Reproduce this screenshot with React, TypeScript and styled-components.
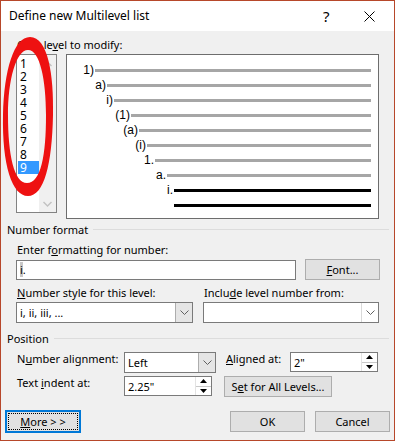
import React from 'react';
import styled, { createGlobalStyle } from 'styled-components';

const GlobalStyle = createGlobalStyle`
  html, body {
    margin: 0;
    padding: 0;
    background: #f0f0f0;
  }
  body {
    font-family: 'Segoe UI', 'Noto Sans', sans-serif;
    font-size: 11px;
    color: #000;
  }
  * {
    box-sizing: border-box;
  }
`;

const levels = ['1', '2', '3', '4', '5', '6', '7', '8', '9'];

const previewRows = [
  { label: '1)', indent: 28 },
  { label: 'a)', indent: 40 },
  { label: 'i)', indent: 47 },
  { label: '(1)', indent: 64 },
  { label: '(a)', indent: 72 },
  { label: '(i)', indent: 80 },
  { label: '1.', indent: 88 },
  { label: 'a.', indent: 100 },
  { label: 'i.', indent: 107, active: true },
  { label: '', indent: 107, active: true },
];

// hand-drawn loop round the level list
const ringPath =
  'M30 37 C48 37 54 75 53 115 C52 165 44 196 28 196 C12 196 2 165 3 115 C4 70 14 37 30 37 Z ' +
  'M28 50 C40 50 46 80 46 115 C46 155 41 183 27 183 C14 183 8 155 8 115 C8 80 16 50 28 50 Z';

const ChevronDown = () => (
  <svg width="9" height="6" viewBox="0 0 9 6">
    <path d="M0.5 0.5 L4.5 4.5 L8.5 0.5" fill="none" stroke="#606060" strokeWidth="1" />
  </svg>
);

const Spinner = () => (
  <SpinButtons>
    <SpinHalf>
      <svg width="7" height="4" viewBox="0 0 7 4">
        <path d="M0 4 L3.5 0 L7 4 Z" fill="#000" />
      </svg>
    </SpinHalf>
    <SpinHalf $bottom>
      <svg width="7" height="4" viewBox="0 0 7 4">
        <path d="M0 0 L3.5 4 L7 0 Z" fill="#000" />
      </svg>
    </SpinHalf>
  </SpinButtons>
);

export default function App() {
  return (
    <>
      <GlobalStyle />
      <Window>
        <TitleBar>
          <Title>Define new Multilevel list</Title>
          <HelpGlyph>?</HelpGlyph>
          <CloseGlyph>
            <svg width="11" height="11" viewBox="0 0 11 11">
              <path d="M0.5 0.5 L10.5 10.5 M10.5 0.5 L0.5 10.5" stroke="#000" strokeWidth="1" />
            </svg>
          </CloseGlyph>
        </TitleBar>

        <Body>
          <Indented>
            <Label $mt={7}>
              Click le<u>v</u>el to modify:
            </Label>
            <LevelRow>
              <LevelList>
                <LevelItems>
                  {levels.map((l) => (
                    <LevelItem key={l} $selected={l === '9'}>
                      {l}
                    </LevelItem>
                  ))}
                </LevelItems>
                <ScrollTrack>
                  <svg width="9" height="6" viewBox="0 0 9 6">
                    <path d="M0.5 5 L4.5 1 L8.5 5" fill="none" stroke="#c2c2c2" strokeWidth="1.4" />
                  </svg>
                  <svg width="9" height="6" viewBox="0 0 9 6">
                    <path d="M0.5 1 L4.5 5 L8.5 1" fill="none" stroke="#c2c2c2" strokeWidth="1.4" />
                  </svg>
                </ScrollTrack>
              </LevelList>
              <Preview>
                {previewRows.map((r, i) => (
                  <PreviewRow key={i}>
                    <PreviewLabel $width={r.indent}>{r.label}</PreviewLabel>
                    <PreviewLine $active={!!r.active} />
                  </PreviewRow>
                ))}
              </Preview>
            </LevelRow>
          </Indented>

          <SectionHeader $mt={3}>
            <span>Number format</span>
            <Rule />
          </SectionHeader>

          <Indented>
            <Label $mt={6}>
              Enter f<u>o</u>rmatting for number:
            </Label>
            <FormatRow>
              <TextBox $width={280}>
                <Selected>i</Selected>.
              </TextBox>
              <Button $width={75}>
                <u>F</u>ont...
              </Button>
            </FormatRow>
            <TwoCols>
              <Field>
                <Label>
                  <u>N</u>umber style for this level:
                </Label>
                <Select $width={177}>
                  <SelectValue>i, ii, iii, ...</SelectValue>
                  <DropButton $filled>
                    <ChevronDown />
                  </DropButton>
                </Select>
              </Field>
              <Field>
                <Label>
                  Inclu<u>d</u>e level number from:
                </Label>
                <Select $width={176}>
                  <SelectValue />
                  <DropButton>
                    <ChevronDown />
                  </DropButton>
                </Select>
              </Field>
            </TwoCols>
          </Indented>

          <SectionHeader $mt={8}>
            <span>Position</span>
            <Rule />
          </SectionHeader>

          <Indented>
            <PositionGrid>
              <Label>
                N<u>u</u>mber alignment:
              </Label>
              <Select $width={92}>
                <SelectValue>Left</SelectValue>
                <DropButton $filled>
                  <ChevronDown />
                </DropButton>
              </Select>
              <Label>
                <u>A</u>ligned at:
              </Label>
              <SpinBox>
                <SpinValue>2"</SpinValue>
                <Spinner />
              </SpinBox>

              <Label>
                Text <u>i</u>ndent at:
              </Label>
              <SpinBox>
                <SpinValue>2.25"</SpinValue>
                <Spinner />
              </SpinBox>
              <WideButton>
                S<u>e</u>t for All Levels...
              </WideButton>
            </PositionGrid>
          </Indented>

          <FooterRow>
            <MoreButton>
              <FocusRing>
                <u>M</u>ore &gt; &gt;
              </FocusRing>
            </MoreButton>
            <Spacer />
            <Button $width={75}>OK</Button>
            <Button $width={75}>Cancel</Button>
          </FooterRow>
        </Body>

        <Scribble width="60" height="200" viewBox="0 0 60 200">
          <path fillRule="evenodd" fill="#ee1111" d={ringPath} />
        </Scribble>
      </Window>
    </>
  );
}

const Window = styled.div`
  position: relative;
  width: 395px;
  height: 441px;
  border: 1px solid #b7472a;
  background: #f0f0f0;
  display: flex;
  flex-direction: column;
  overflow: hidden;
`;

const TitleBar = styled.div`
  height: 30px;
  background: #fff;
  display: flex;
  align-items: center;
  padding-left: 8px;
`;

const Title = styled.div`
  flex: 1;
  font-size: 12px;
  margin-top: -1px;
`;

const HelpGlyph = styled.div`
  width: 14px;
  font-size: 15px;
  margin-right: 27px;
`;

const CloseGlyph = styled.div`
  display: flex;
  margin-right: 19px;
`;

const Body = styled.div`
  flex: 1;
  padding: 0 5px 0 6px;
  display: flex;
  flex-direction: column;
`;

const Indented = styled.div`
  padding-left: 9px;
  display: flex;
  flex-direction: column;
`;

const Label = styled.div<{ $mt?: number }>`
  line-height: 14px;
  white-space: nowrap;
  margin-top: ${(p) => p.$mt ?? 0}px;
  padding-left: 1px;
`;

const LevelRow = styled.div`
  display: flex;
  align-items: flex-start;
  margin-top: 2px;
`;

const LevelList = styled.div`
  width: 41px;
  height: 159px;
  border: 1px solid #828282;
  background: #fff;
  display: flex;
`;

const LevelItems = styled.div`
  width: 22px;
  padding: 2px 0 0 1px;
  display: flex;
  flex-direction: column;
`;

const LevelItem = styled.div<{ $selected: boolean }>`
  height: 13px;
  line-height: 13px;
  font-size: 12px;
  padding-left: 2px;
  background: ${(p) => (p.$selected ? '#3399ff' : 'transparent')};
  color: ${(p) => (p.$selected ? '#fff' : '#000')};
`;

const ScrollTrack = styled.div`
  flex: 1;
  background: #f0f0f0;
  display: flex;
  flex-direction: column;
  justify-content: space-between;
  align-items: center;
  padding: 6px 0 5px;
`;

const Preview = styled.div`
  margin-left: 9px;
  width: 313px;
  height: 165px;
  border: 1px solid #6d6d6d;
  background: #fff;
  padding: 8px 7px 0 0;
  display: flex;
  flex-direction: column;
`;

const PreviewRow = styled.div`
  height: 15px;
  display: flex;
  align-items: center;
`;

const PreviewLabel = styled.div<{ $width: number }>`
  width: ${(p) => p.$width}px;
  flex: none;
  text-align: right;
  padding-right: 1px;
  font-family: 'Liberation Sans', Arial, sans-serif;
  font-size: 12px;
  line-height: 13px;
`;

const PreviewLine = styled.div<{ $active: boolean }>`
  flex: 1;
  height: 3px;
  background: ${(p) => (p.$active ? '#000' : '#a6a6a6')};
`;

const SectionHeader = styled.div<{ $mt: number }>`
  margin-top: ${(p) => p.$mt}px;
  display: flex;
  align-items: center;
  gap: 5px;
  line-height: 15px;
`;

const Rule = styled.div`
  flex: 1;
  height: 1px;
  background: #dcdcdc;
`;

const FormatRow = styled.div`
  display: flex;
  align-items: center;
  gap: 9px;
  margin-top: 2px;
`;

const TextBox = styled.div<{ $width: number }>`
  width: ${(p) => p.$width}px;
  height: 20px;
  border: 1px solid #7a7a7a;
  background: #fff;
  padding-left: 3px;
  display: flex;
  align-items: center;
`;

const Selected = styled.span`
  background: #c8c8c8;
`;

const Button = styled.div<{ $width: number }>`
  width: ${(p) => p.$width}px;
  height: 21px;
  border: 1px solid #adadad;
  background: #e1e1e1;
  display: flex;
  align-items: center;
  justify-content: center;
`;

const TwoCols = styled.div`
  display: flex;
  gap: 10px;
  margin-top: 6px;
`;

const Field = styled.div`
  display: flex;
  flex-direction: column;
  gap: 2px;
`;

const Select = styled.div<{ $width: number }>`
  width: ${(p) => p.$width}px;
  height: 21px;
  border: 1px solid #7a7a7a;
  background: #fff;
  display: flex;
`;

const SelectValue = styled.div`
  flex: 1;
  padding-left: 3px;
  display: flex;
  align-items: center;
`;

const DropButton = styled.div<{ $filled?: boolean }>`
  width: 17px;
  border-left: 1px solid ${(p) => (p.$filled ? '#adadad' : '#d9d9d9')};
  background: ${(p) => (p.$filled ? '#e5e5e5' : '#fff')};
  display: flex;
  align-items: center;
  justify-content: center;
`;

const PositionGrid = styled.div`
  margin-top: 6px;
  display: grid;
  grid-template-columns: 108px 101px 65px 88px;
  grid-auto-rows: 21px;
  row-gap: 3px;
  align-items: start;
`;

const SpinBox = styled.div`
  width: 88px;
  height: 20px;
  border: 1px solid #7a7a7a;
  background: #fff;
  display: flex;
`;

const SpinValue = styled.div`
  flex: 1;
  padding-left: 3px;
  display: flex;
  align-items: center;
`;

const SpinButtons = styled.div`
  width: 16px;
  display: flex;
  flex-direction: column;
  border-left: 1px solid #e3e3e3;
`;

const SpinHalf = styled.div<{ $bottom?: boolean }>`
  flex: 1;
  display: flex;
  align-items: center;
  justify-content: center;
  border-top: ${(p) => (p.$bottom ? '1px solid #c9c9c9' : 'none')};
`;

const WideButton = styled.div`
  grid-column: 3 / 5;
  width: 108px;
  height: 21px;
  margin-left: -1px;
  border: 1px solid #adadad;
  background: #e1e1e1;
  display: flex;
  align-items: center;
  justify-content: center;
`;

const FooterRow = styled.div`
  margin-top: 13px;
  display: flex;
  align-items: center;
  gap: 10px;
  margin-right: -1px;
`;

const MoreButton = styled.div`
  margin-left: -2px;
  width: 76px;
  height: 23px;
  border: 2px solid #0078d7;
  background: #e1e1e1;
  padding: 1px;
  display: flex;
`;

const FocusRing = styled.div`
  flex: 1;
  border: 1px dotted #000;
  display: flex;
  align-items: center;
  justify-content: center;
`;

const Spacer = styled.div`
  flex: 1;
`;

const Scribble = styled.svg`
  position: absolute;
  left: -1px;
  top: -1px;
  pointer-events: none;
`;
